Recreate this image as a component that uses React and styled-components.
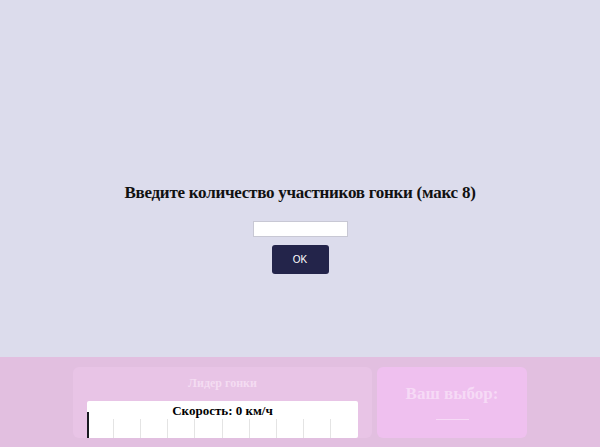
import React from "react";
import styled, { createGlobalStyle } from "styled-components";

const Global = createGlobalStyle`
  html, body { margin: 0; padding: 0; }
  body { background: #dcdcec; font-family: "Liberation Serif", "Times New Roman", serif; }
  #root { width: 600px; height: 447px; overflow: hidden; }
`;

const Page = styled.div`
  width: 600px;
  height: 447px;
  display: flex;
  flex-direction: column;
`;

const Main = styled.main`
  height: 357px;
  background: #dcdcec;
  display: flex;
  flex-direction: column;
  align-items: center;
  padding-top: 182px;
  box-sizing: border-box;
`;

const Heading = styled.h2`
  margin: 0;
  font-family: "Liberation Serif", "Times New Roman", serif;
  font-weight: bold;
  font-size: 17px;
  letter-spacing: -0.25px;
  line-height: 22px;
  color: #111;
`;

const Input = styled.input`
  margin-top: 17px;
  width: 95px;
  height: 16px;
  box-sizing: border-box;
  border: 1px solid #c8c8d4;
  background: #fff;
  padding: 0;
`;

const Button = styled.button`
  margin-top: 8px;
  width: 57px;
  height: 29px;
  border: none;
  border-radius: 3px;
  background: #23244a;
  color: #fff;
  font-family: "Liberation Sans", Arial, sans-serif;
  font-size: 10px;
`;

const Bottom = styled.section`
  flex: 1;
  background: #e2bfe0;
  display: flex;
  justify-content: center;
  gap: 5px;
  padding-top: 10px;
  padding-bottom: 9px;
  box-sizing: border-box;
`;

const LeaderCard = styled.div`
  width: 299px;
  background: #e8c4e6;
  border-radius: 6px;
  display: flex;
  flex-direction: column;
  align-items: center;
  padding-top: 9px;
  box-sizing: border-box;
`;

const CardTitle = styled.div`
  font-family: "Liberation Serif", "Times New Roman", serif;
  font-weight: bold;
  font-size: 12px;
  line-height: 15px;
  color: #f4dcf2;
`;

const Speedo = styled.div`
  margin-top: 10px;
  width: 271px;
  height: 37px;
  background: #fff;
  border-radius: 2px;
  position: relative;
  display: flex;
  flex-direction: column;
  align-items: center;
`;

const SpeedText = styled.div`
  font-family: "Liberation Serif", "Times New Roman", serif;
  font-weight: bold;
  font-size: 13px;
  line-height: 16px;
  color: #000;
  margin-top: 2px;
`;

const Scale = styled.div`
  flex: 1;
  width: 100%;
  display: grid;
  grid-template-columns: repeat(10, 1fr);
`;

const Cell = styled.div`
  border-right: ${(p) => (p.$last ? "none" : "1px solid #e4e4e4")};
`;

const Needle = styled.div`
  position: absolute;
  left: 0;
  bottom: 0;
  width: 2px;
  height: 26px;
  background: #1a1a22;
`;

const ChoiceCard = styled.div`
  width: 150px;
  background: #efc0ef;
  border-radius: 6px;
  display: flex;
  flex-direction: column;
  align-items: center;
  padding-top: 17px;
  box-sizing: border-box;
`;

const ChoiceTitle = styled.div`
  font-family: "Liberation Serif", "Times New Roman", serif;
  font-weight: bold;
  font-size: 17px;
  line-height: 20px;
  color: #f6daf6;
`;

const Underline = styled.div`
  margin-top: 15px;
  width: 33px;
  height: 1px;
  background: #f6daf6;
`;

export default function App() {
  return (
    <Page>
      <Global />
      <Main>
        <Heading>Введите количество участников гонки (макс 8)</Heading>
        <Input type="number" />
        <Button>OK</Button>
      </Main>
      <Bottom>
        <LeaderCard>
          <CardTitle>Лидер гонки</CardTitle>
          <Speedo>
            <SpeedText>Скорость: 0 км/ч</SpeedText>
            <Scale>
              {Array.from({ length: 10 }).map((_, i) => (
                <Cell key={i} $last={i === 9} />
              ))}
            </Scale>
            <Needle />
          </Speedo>
        </LeaderCard>
        <ChoiceCard>
          <ChoiceTitle>Ваш выбор:</ChoiceTitle>
          <Underline />
        </ChoiceCard>
      </Bottom>
    </Page>
  );
}
